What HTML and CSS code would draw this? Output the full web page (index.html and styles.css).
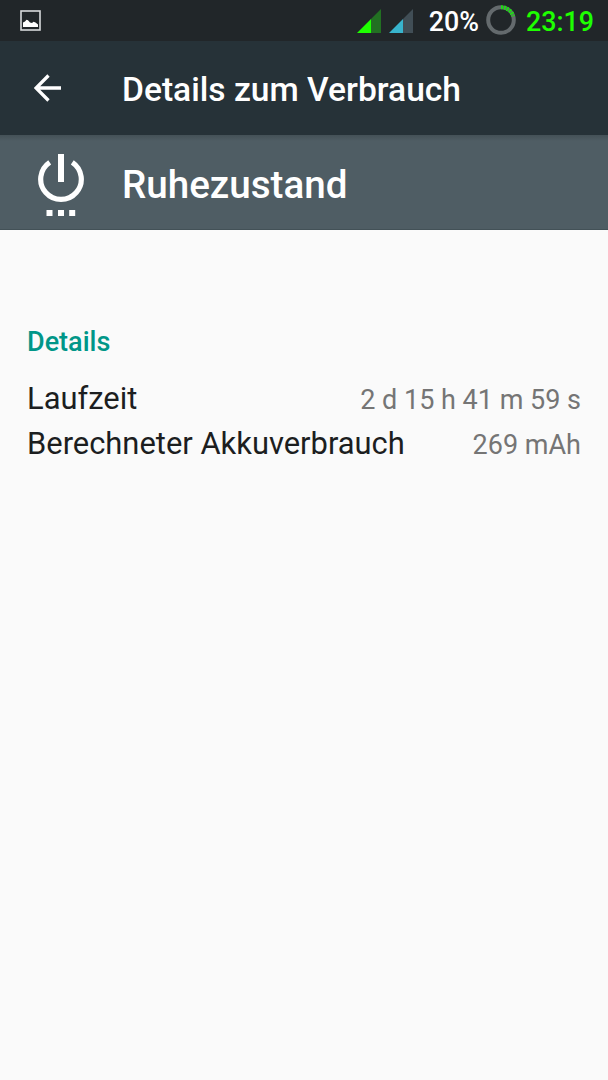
FILE: index.html
```
<!DOCTYPE html>
<html lang="de">
<head>
  <meta charset="UTF-8"/>
  <title>Details zum Verbrauch</title>
  <link rel="stylesheet" href="styles.css">
</head>
<body>
<div class="statusbar">
  <svg class="picture" width="22" height="22" viewBox="0 0 22 22">
    <rect x="1" y="1" width="19" height="19" fill="none" stroke="#d8dadb" stroke-width="1.600"/>
    <path d="M3 17v-4.500l2-1 1.500-1.700 1.500.4 2 2.300 2 .5 1.500-1.200 2 .7 2.500 2v2.500z" fill="#fff"/>
  </svg>
  <svg class="signal" width="24" height="24" viewBox="0 0 24 24">
    <path d="M0 24L14 10V24z" fill="#1eff00"/>
    <path d="M14 10L24 0V24H14z" fill="#227022"/>
  </svg>
  <svg class="signal" width="24" height="24" viewBox="0 0 24 24">
    <path d="M0 24L14 10V24z" fill="#38b4cd"/>
    <path d="M14 10L24 0V24H14z" fill="#414e56"/>
  </svg>
  <span class="percent">20%</span>
  <svg class="battery" width="30" height="30" viewBox="0 0 30 30">
    <circle cx="15" cy="15" r="12.800" fill="none" stroke="#646a6d" stroke-width="4"/>
    <path d="M15 2.200A12.800 12.800 0 0 1 27.200 11.200" fill="none" stroke="#1edc14" stroke-width="4" stroke-dasharray="2 1"/>
  </svg>
  <span class="clock">23:19</span>
</div>
<div class="toolbar">
  <svg class="back" width="28" height="28" viewBox="0 0 28 28">
    <path d="M27 14H2M14.500 1.500L2 14l12.500 12.500" fill="none" stroke="#fff" stroke-width="3.300"/>
  </svg>
  <h1>Details zum Verbrauch</h1>
</div>
<div class="header">
  <svg class="power" width="48" height="64" viewBox="0 0 48 64">
    <path d="M12.700 9.300A20.300 20.300 0 1 0 35.300 9.300" fill="none" stroke="#fff" stroke-width="5.200"/>
    <path d="M21 1h6v28h-6zM9.500 57h6v6h-6zM21 57h6v6h-6zM32.200 57h6v6h-6z" fill="#fff"/>
  </svg>
  <h2>Ruhezustand</h2>
</div>
<div class="content">
  <h3>Details</h3>
  <dl>
    <div class="row">
      <dt>Laufzeit</dt>
      <dd>2 d 15 h 41 m 59 s</dd>
    </div>
    <div class="row">
      <dt>Berechneter Akkuverbrauch</dt>
      <dd>269 mAh</dd>
    </div>
  </dl>
</div>
</body>
</html>
```
FILE: styles.css
```
body {
  margin: 0;
  min-height: 1080px;
  background: #fafafa;
  font-family: Roboto, sans-serif;
}
h1, h2, h3, dl, dd { margin: 0; font-weight: 500; }
svg { display: block; flex: none; }
.statusbar {
  display: flex;
  align-items: center;
  box-sizing: border-box;
  height: 41px;
  padding: 0 14px 0 20px;
  background: #212629;
  font-size: 26.8px;
  font-weight: 500;
  line-height: 39px;
}
.picture { margin-right: auto; }
.signal {
  margin: 0 8px 0 0;
}
.percent {
  margin: 3px 7px 0 8px;
  color: #fff;
}
.battery { margin-top: -1px; }
.clock {
  margin: 3px 0 0 10px;
  color: #1eff00;
}
.toolbar {
  display: flex;
  align-items: center;
  height: 94px;
  padding-left: 34px;
  background: #263238;
  color: #fff;
}
.toolbar h1 {
  margin: 2px 0 0 60px;
  font-size: 33.6px;
}
.header {
  display: flex;
  align-items: center;
  box-sizing: border-box;
  height: 95px;
  padding-left: 37px;
  border-bottom: 1px solid #435157;
  background: linear-gradient(#445157, #4f5d64 6px);
  color: #fff;
}
.power { margin-top: 5px; }
.header h2 {
  margin: 4px 0 0 37px;
  font-size: 38.6px;
}
.content {
  padding: 96px 27px 0;
}
.content h3 {
  color: #009688;
  font-size: 27px;
  line-height: 32px;
}
.content dl { margin-top: 18px; }
.row {
  display: flex;
  justify-content: space-between;
  align-items: baseline;
  height: 45px;
  line-height: 45px;
}
.row dt {
  color: #1c1e1f;
  font-size: 30.9px;
  font-weight: 400;
}
.row dd {
  color: #757575;
  font-size: 27px;
  font-weight: 400;
}
```
